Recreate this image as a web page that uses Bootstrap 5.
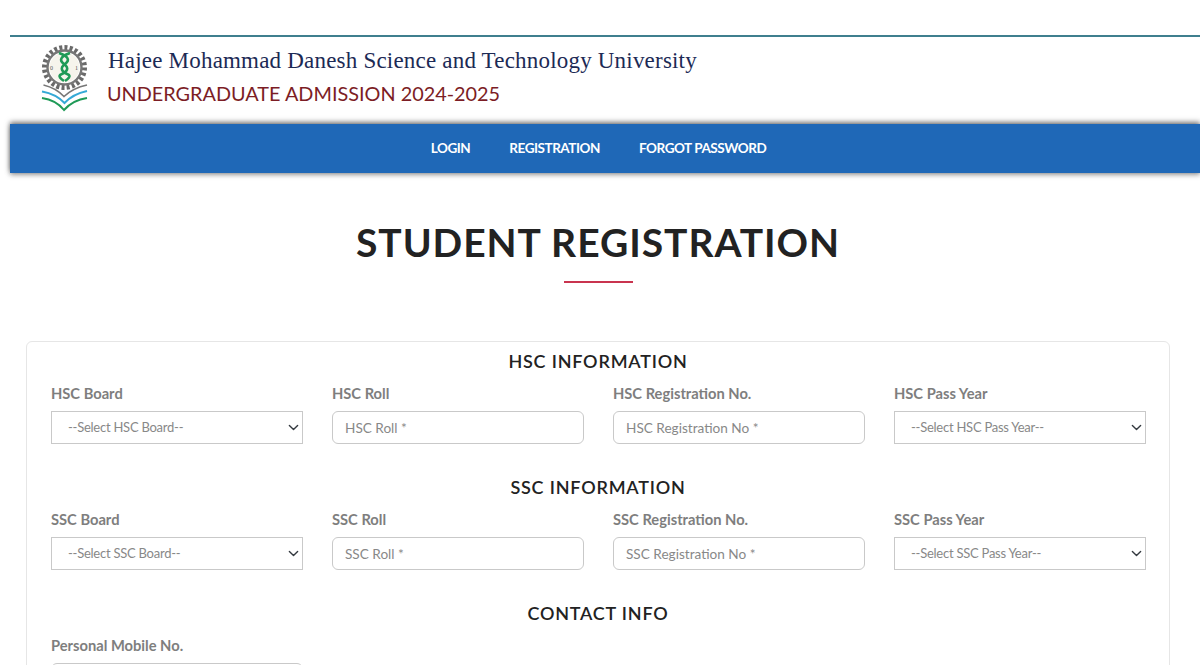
<!DOCTYPE html>
<html lang="en">
<head>
    <meta charset="UTF-8">
    <meta name="viewport" content="width=device-width, initial-scale=1.0">
    <title>Student Registration</title>
    <link href="https://cdn.jsdelivr.net/npm/bootstrap@5.3.0/dist/css/bootstrap.min.css" rel="stylesheet">
    <style>
        html, body { height: 665px; overflow: hidden; }
        body { font-family: Lato, sans-serif; background: #fff; padding: 35px 0 0 10px; }
        .top-band { border-top: 2px solid #3f7f8e; height: 89px; padding: 7px 0 0 31px; }
        .uni-name { font-family: "Liberation Serif", serif; font-size: 23px; line-height: 28px; letter-spacing: .2px; color: #1c2a55; margin-top: 3px; margin-left: 3px; }
        .uni-sub { font-family: Lato, sans-serif; font-size: 19.85px; line-height: 26px; color: #7c1d25; margin-top: 5px; margin-left: 2px; }
        .main-nav { background: #1f68b7; height: 49px; box-shadow: 0 -2px 5px rgba(0,0,0,.5), 0 2px 5px rgba(0,0,0,.35); position: relative; padding-right: 13px; gap: 39px; }
        .main-nav a { color: #fff; font-size: 13.5px; font-weight: 700; text-decoration: none; letter-spacing: -.45px; }
        .page-title { font-size: 39px; font-weight: 700; letter-spacing: .95px; color: #222; line-height: 48px; margin: 45px 0 0; text-align: center; padding-right: 14px; }
        .title-rule { width: 69px; height: 2px; background: #c9344f; margin: 15px auto 0; position: relative; left: -7px; }
        .form-box { width: 1144px; margin: 58px 0 0 16px; border: 1px solid #e6e6e6; border-radius: 6px; padding: 7px 24px 0; height: 400px; }
        .sec-head { font-size: 18px; font-weight: 600; letter-spacing: .8px; line-height: 24px; color: #222; text-align: center; margin: 0 0 11px; }
        .field-row { --bs-gutter-x: 30px; margin-bottom: 31px; }
        .field-label { font-size: 14.7px; font-weight: 700; color: #7e7e7e; line-height: 18px; margin-bottom: 9px; display: block; }
        .form-box .form-control, .form-box .form-select { width: calc(100% + 1px); height: 33px; color: #888; border-color: #c9c9c9; padding: 0 12px; box-shadow: none; }
        .form-box .form-control { font-size: 13.6px; }
        .form-box .form-control::placeholder { color: #888; opacity: 1; }
        .form-box .form-select { border-radius: 0; font-size: 13px; letter-spacing: -.25px; padding-left: 16px; background-position: right 3px center; background-size: 11px 11px; }
    </style>
</head>
<body>
    <div class="top-band d-flex">
        <svg width="48" height="70" viewBox="0 0 48 70" class="flex-shrink-0">
            <circle cx="23.5" cy="23.5" r="20" fill="none" stroke="#6a6a6a" stroke-width="5" stroke-dasharray="3 2.2"/>
            <circle cx="23.5" cy="23.5" r="17" fill="none" stroke="#777" stroke-width="2.4"/>
            <circle cx="23.5" cy="23.5" r="15" fill="#f6f4ec"/>
            <path d="M18 9 Q32 14 24 20 Q16 26 28 31 Q30 33 24 37" fill="none" stroke="#1f9a57" stroke-width="2.6"/>
            <path d="M29 9 Q15 14 23 20 Q31 26 19 31 Q17 33 23 37" fill="none" stroke="#1f9a57" stroke-width="2.6"/>
            <text x="9" y="26" font-size="6" fill="#555" font-family="Liberation Serif, serif">0</text>
            <text x="34" y="26" font-size="6" fill="#555" font-family="Liberation Serif, serif">1</text>
            <path d="M1 40 Q14 43 23 53 Q32 43 46 40 L46 42 Q33 45 23 56 Q14 45 1 42 Z" fill="#fff"/>
            <path d="M2.5 41 Q15 44 23 52.5 Q32 44 46 41" fill="none" stroke="#777" stroke-width="1.6"/>
            <path d="M1 47.5 Q15 50 23.5 59 Q32 50 46 47" fill="none" stroke="#35a9d6" stroke-width="2"/>
            <path d="M1 54 Q15 56 23 66 Q32 56 46 54" fill="none" stroke="#1f9a57" stroke-width="2"/>
        </svg>
        <div class="ms-3">
            <div class="uni-name">Hajee Mohammad Danesh Science and Technology University</div>
            <div class="uni-sub">UNDERGRADUATE ADMISSION 2024-2025</div>
        </div>
    </div>

    <nav class="main-nav d-flex justify-content-center align-items-center">
        <a href="#">LOGIN</a>
        <a href="#">REGISTRATION</a>
        <a href="#">FORGOT PASSWORD</a>
    </nav>

    <h1 class="page-title">STUDENT REGISTRATION</h1>
    <div class="title-rule"></div>

    <div class="form-box">
        <h2 class="sec-head">HSC INFORMATION</h2>
        <div class="row field-row">
            <div class="col-3">
                <label class="field-label">HSC Board</label>
                <select class="form-select"><option>--Select HSC Board--</option></select>
            </div>
            <div class="col-3">
                <label class="field-label">HSC Roll</label>
                <input class="form-control" placeholder="HSC Roll *">
            </div>
            <div class="col-3">
                <label class="field-label">HSC Registration No.</label>
                <input class="form-control" placeholder="HSC Registration No *">
            </div>
            <div class="col-3">
                <label class="field-label">HSC Pass Year</label>
                <select class="form-select"><option>--Select HSC Pass Year--</option></select>
            </div>
        </div>

        <h2 class="sec-head">SSC INFORMATION</h2>
        <div class="row field-row">
            <div class="col-3">
                <label class="field-label">SSC Board</label>
                <select class="form-select"><option>--Select SSC Board--</option></select>
            </div>
            <div class="col-3">
                <label class="field-label">SSC Roll</label>
                <input class="form-control" placeholder="SSC Roll *">
            </div>
            <div class="col-3">
                <label class="field-label">SSC Registration No.</label>
                <input class="form-control" placeholder="SSC Registration No *">
            </div>
            <div class="col-3">
                <label class="field-label">SSC Pass Year</label>
                <select class="form-select"><option>--Select SSC Pass Year--</option></select>
            </div>
        </div>

        <h2 class="sec-head">CONTACT INFO</h2>
        <div class="row field-row">
            <div class="col-3">
                <label class="field-label">Personal Mobile No.</label>
                <input class="form-control">
            </div>
        </div>
    </div>
</body>
</html>
